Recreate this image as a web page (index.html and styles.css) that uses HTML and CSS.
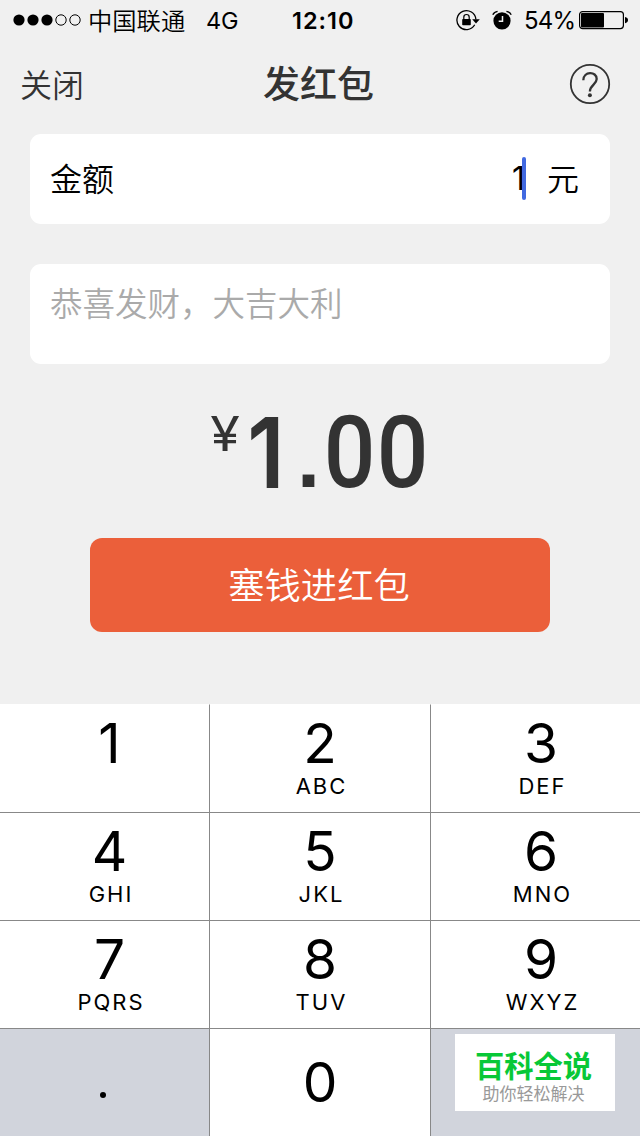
FILE: index.html
```
<!DOCTYPE html>
<html lang="zh-CN">
<head>
<meta charset="utf-8">
<title>发红包</title>
<link rel="stylesheet" href="styles.css">
</head>
<body>
<div class="screen">
  <div class="status">
    <svg class="signal" width="68" height="12" viewBox="0 0 68 12"><g fill="#000"><circle cx="6" cy="6" r="5.6"/><circle cx="20" cy="6" r="5.6"/><circle cx="34" cy="6" r="5.6"/></g><g fill="none" stroke="#000"><circle cx="48" cy="6" r="5.2"/><circle cx="62" cy="6" r="5.2"/></g></svg>
    <span class="carrier">中国联通</span>
    <span class="network">4G</span>
    <span class="clock">12:10</span>
    <svg class="lock" width="24" height="22" viewBox="0 0 24 22"><path d="M18.7 15.8A9.5 9.5 0 1 1 19.9 10.5" fill="none" stroke="#000" stroke-width="1.3"/><path d="M16.2 10.300h7.600l-3.800 4.200z"/><rect x="6.200" y="10" width="8.600" height="6.300" rx=".8"/><path d="M7.800 10.400V8.200a2.700 2.700 0 0 1 5.400 0v2.200" fill="none" stroke="#000" stroke-width="1.2"/></svg>
    <svg class="alarm" width="20" height="20" viewBox="0 0 20 20"><circle cx="10" cy="10.8" r="8.6"/><path d="M10.500 6v5.200H6.700" fill="none" stroke="#f0f0f0" stroke-width="1.5"/><path d="M.8 4.800Q2.200 1.800 5.600 1.400M19.200 4.800Q17.800 1.800 14.400 1.400" fill="none" stroke="#000" stroke-width="1.4"/></svg>
    <span class="percent">54%</span>
    <svg class="battery" width="50" height="20" viewBox="0 0 50 20"><rect x=".6" y="1.600" width="43.800" height="17" rx="3" fill="none" stroke="#000" stroke-width="1.2"/><rect x="2" y="3" width="23" height="14.400" rx="1"/><path d="M46 7q3 .5 3 3t-3 3.200z"/></svg>
  </div>
  <div class="nav">
    <span class="close">关闭</span>
    <span class="title">发红包</span>
    <svg class="help" width="42" height="42" viewBox="0 0 42 42"><circle cx="21" cy="21" r="19.200" fill="none" stroke="#333" stroke-width="1.8"/><path d="M14.300 17.300c0-9.400 13.400-9.400 13.400-1.200 0 5.200-6.800 6-6.800 12.400" fill="none" stroke="#333" stroke-width="2.300"/><circle cx="20.900" cy="32.300" r="2" fill="#333"/></svg>
  </div>
  <div class="field amount">
    <span class="label">金额</span>
    <span class="value">1</span><span class="caret"></span>
    <span class="unit">元</span>
  </div>
  <div class="field wish">恭喜发财，大吉大利</div>
  <div class="total"><span class="yen">¥</span><span class="d one">1</span><span class="d dot">.</span><span class="d zero-digit">0</span><span class="d zero-digit">0</span></div>
  <div class="submit">塞钱进红包</div>
  <div class="keypad">
    <div class="key"><b>1</b></div>
    <div class="key"><b>2</b><i>ABC</i></div>
    <div class="key"><b>3</b><i>DEF</i></div>
    <div class="key"><b>4</b><i>GHI</i></div>
    <div class="key"><b>5</b><i>JKL</i></div>
    <div class="key"><b>6</b><i>MNO</i></div>
    <div class="key"><b>7</b><i>PQRS</i></div>
    <div class="key"><b>8</b><i>TUV</i></div>
    <div class="key"><b>9</b><i>WXYZ</i></div>
    <div class="key gray point"><span class="decimal"></span></div>
    <div class="key zero"><b>0</b></div>
    <div class="key gray brand"><div class="card"><span class="name">百科全说</span><span class="slogan">助你轻松解决</span></div></div>
  </div>
</div>
</body>
</html>
```
FILE: styles.css
```
* { box-sizing: border-box; }
body { margin: 0; background: #f0f0f0; font-family: Inter, "Noto Sans CJK SC", sans-serif; color: #000; }
.screen { width: 640px; height: 1136px; overflow: hidden; display: flex; flex-direction: column; }
.screen span, .submit, .wish { white-space: nowrap; }
svg { display: block; flex: none; }
.status { height: 40px; display: flex; align-items: center; padding-left: 13px; }
.carrier { width: 98px; margin-left: 7px; font-size: 24.3px; font-weight: 350; line-height: 40px; padding-top: 1px; }
.network { width: 33px; margin-left: 20px; font-size: 23.5px; letter-spacing: -.3px; padding-top: 1px; }
.clock { width: 62px; margin-left: 53px; font-size: 23.5px; font-weight: 600; letter-spacing: 1px; padding-top: 1px; }
.lock { margin-left: 102px; }
.alarm { margin-left: 12px; }
.percent { width: 52px; margin-left: 12px; font-size: 24px; letter-spacing: -.8px; padding-top: 1px; }
.battery { margin-left: 3px; }
.nav { height: 94px; display: flex; align-items: flex-start; padding: 22px 29px 0 20px; color: #333; }
.close { width: 180px; font-size: 32px; font-weight: 350; line-height: 48px; }
.title { flex: 1; margin-left: 63px; font-size: 37px; font-weight: 500; line-height: 46px; }
.help { margin-top: 1px; }
.field { margin: 0 30px; background: #fff; border-radius: 11px; font-size: 32px; }
.amount { height: 90px; display: flex; align-items: center; padding: 0 31px 2px 20px; }
.label { flex: 1; }
.label, .unit { font-weight: 350; padding-bottom: 3px; }
.value { font-size: 32px; margin-right: -3px; }
.caret { width: 4px; height: 43px; border-radius: 2px; background: #4169e1; margin-right: 21px; z-index: 1; }
.wish { margin-top: 40px; height: 100px; padding: 17px 20px; line-height: 48px; font-size: 32.5px; font-weight: 350; color: #aaa; }
.total { height: 174px; display: flex; align-items: flex-start; padding: 40px 0 0 209px; color: #333; }
.yen { width: 32px; font-size: 48px; line-height: 60px; text-align: center; transform: scaleX(1.12); }
.d { width: 53px; text-align: center; font-family: Roboto, sans-serif; font-size: 101px; line-height: 98px; }
.one { width: 50px; font-family: Inter, sans-serif; font-weight: 600; font-size: 98px; transform: scaleX(.9); }
.dot { width: 31px; margin-left: 2px; font-family: "Liberation Sans", sans-serif; font-weight: 700; font-size: 83px; line-height: 109px; }
.zero-digit { font-weight: 500; transform: translateX(-3px) scaleX(.9); }
.submit { width: 460px; height: 94px; margin: 0 90px; border-radius: 12px; background: #eb5f3a; color: #fff; font-size: 36.3px; font-weight: 350; line-height: 97px; text-align: center; padding-right: 2px; }
.keypad { margin-top: 72px; flex: 1; display: grid; grid-template-columns: 210px 221px 209px; grid-template-rows: repeat(4, 108px); background: #fff; }
.key { display: flex; flex-direction: column; align-items: center; padding-top: 10px; border-right: 1px solid #888; border-top: 1px solid #888; }
.key:nth-child(-n+3) { border-top-color: #fff; }
.key:nth-child(3n) { border-right: 0; padding-left: 11px; }
.key:nth-child(3n+1) { padding-left: 10px; }
.key b { font-size: 55px; line-height: 57px; font-weight: 400; }
.key i { font-size: 22px; line-height: 28px; font-style: normal; letter-spacing: 2px; padding-left: 3px; }
.key.zero { padding-top: 25px; }
.gray { background: #d1d4dc; }
.decimal { width: 6px; height: 6px; border-radius: 50%; background: #000; }
.key.point { padding: 63px 3px 0 0; }
.key.brand { padding: 5px 0 0 24px; align-items: flex-start; }
.card { width: 160px; height: 77px; background: #fff; display: flex; flex-direction: column; align-items: center; padding: 16px 3px 0 0; }
.name { color: #07c837; font-size: 29.3px; font-weight: 700; line-height: 34px; }
.slogan { color: #999; font-size: 17px; line-height: 20px; }
```
